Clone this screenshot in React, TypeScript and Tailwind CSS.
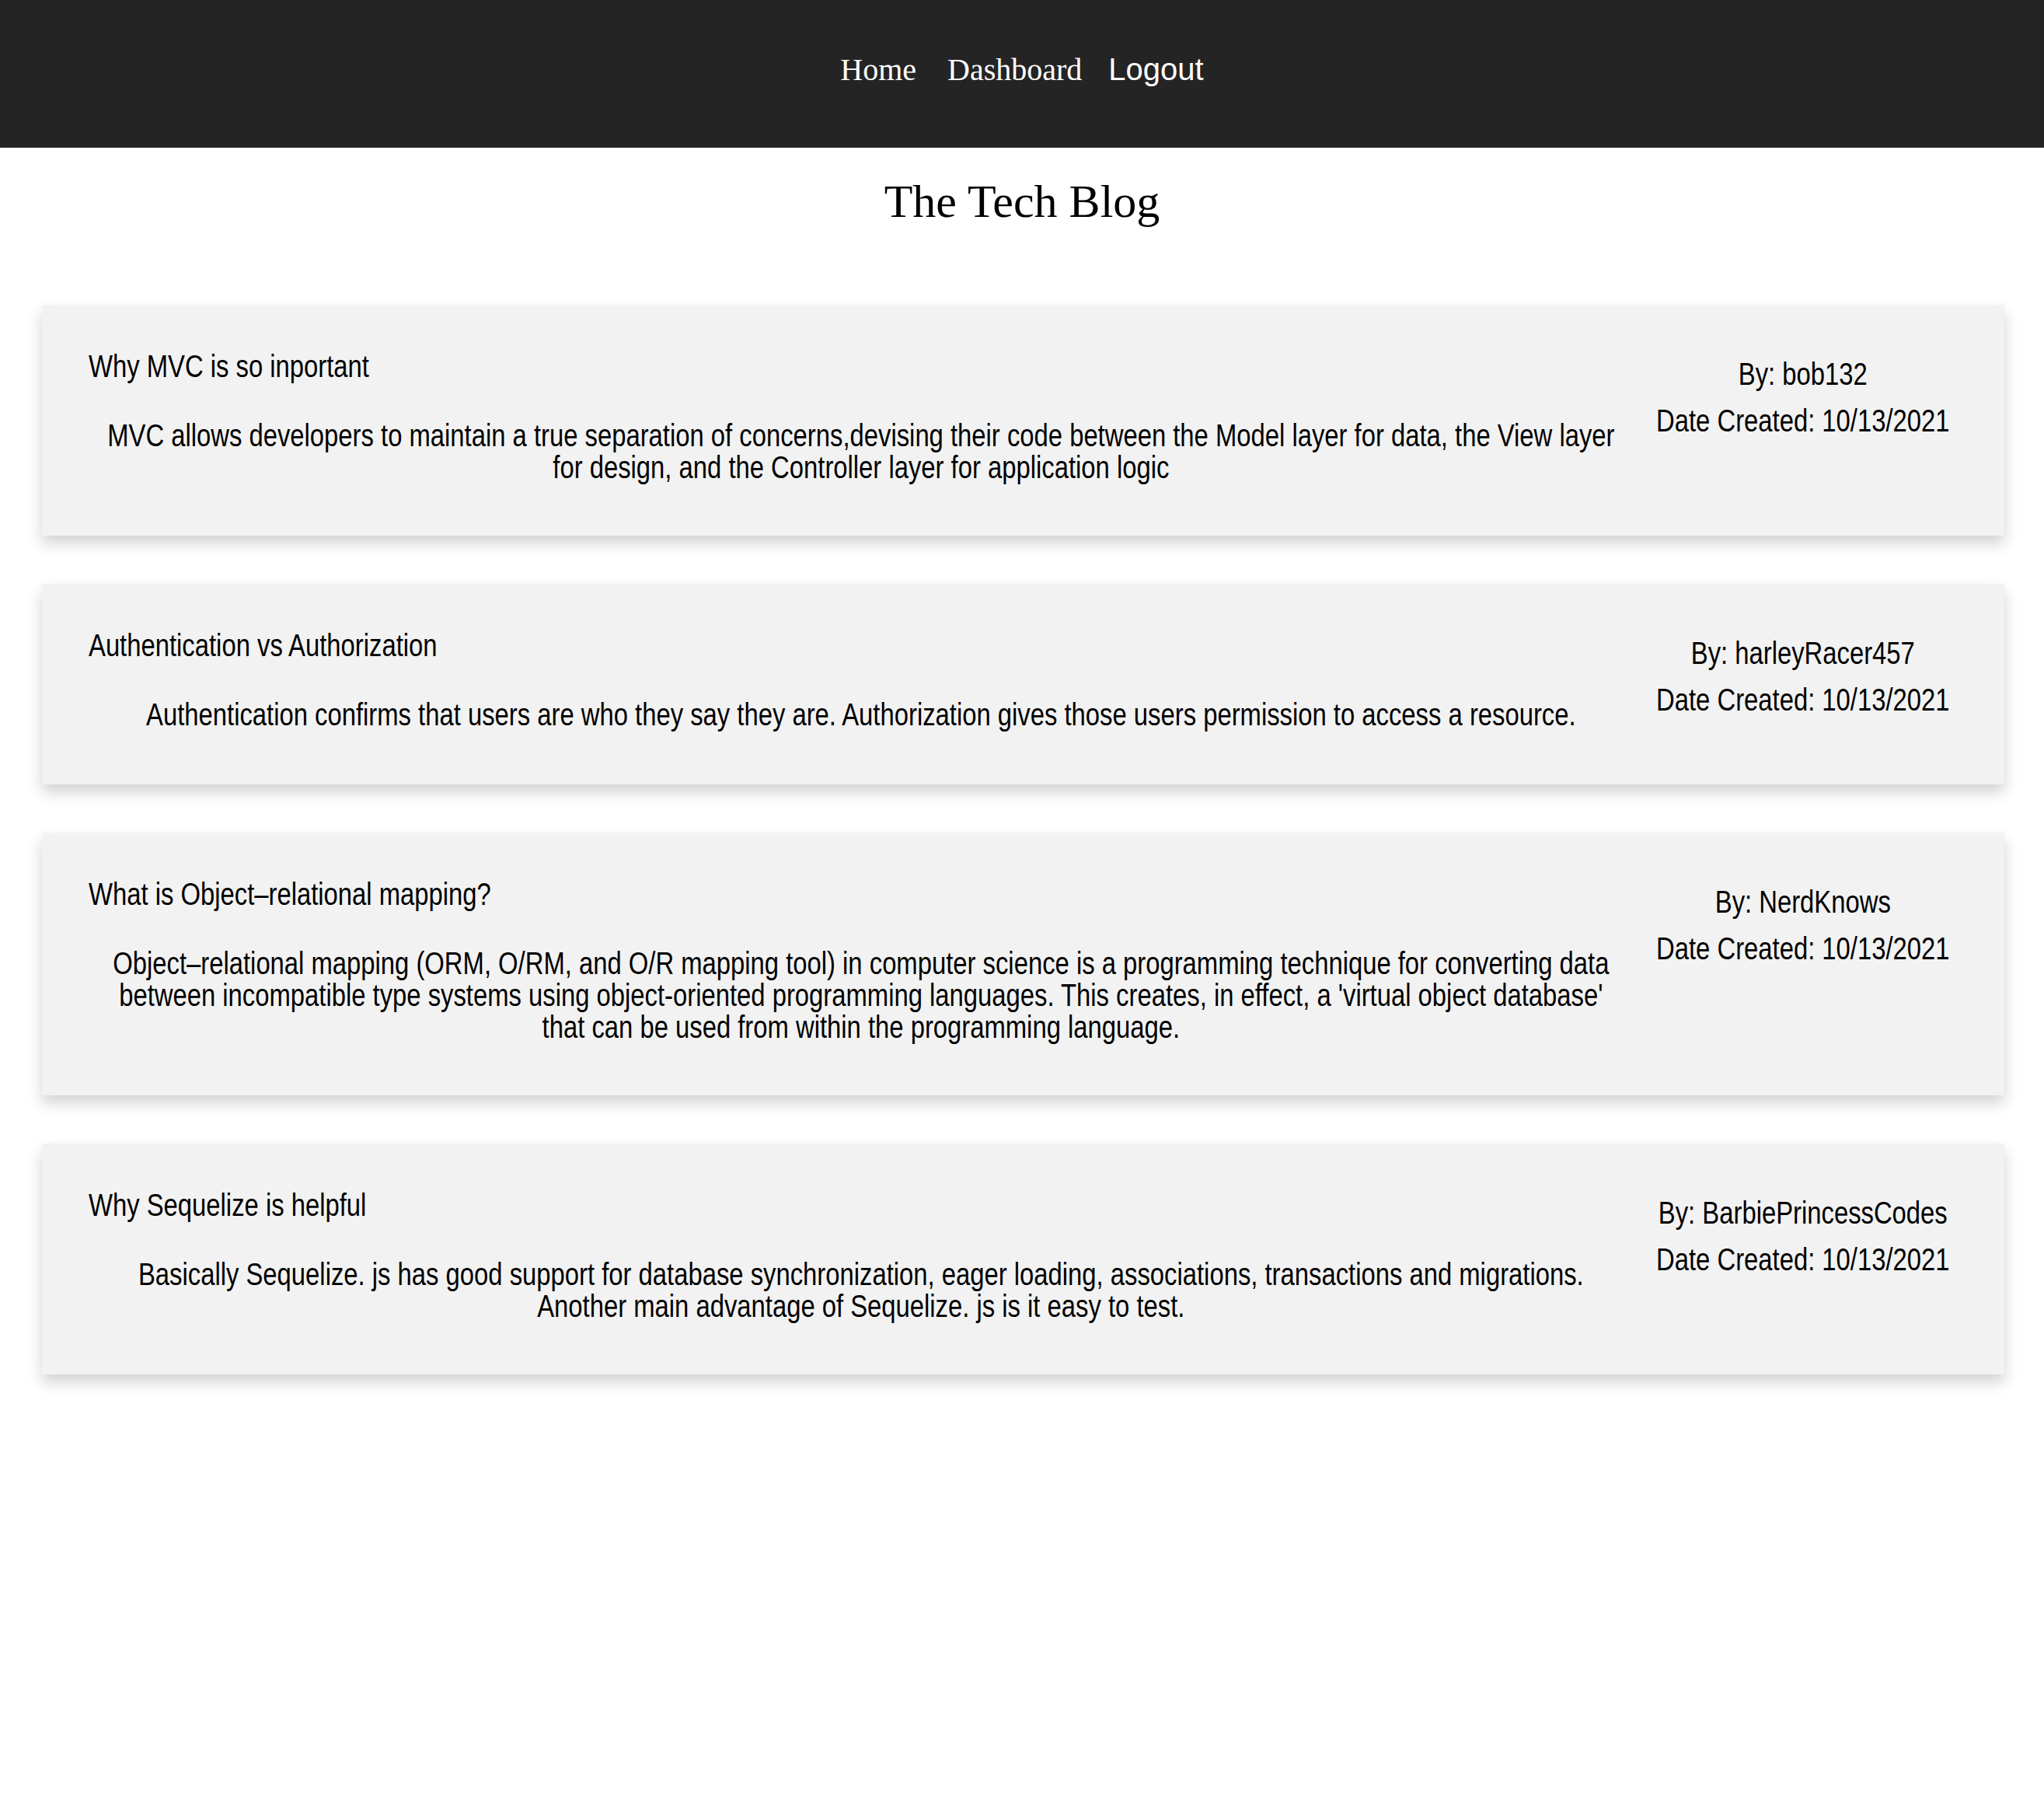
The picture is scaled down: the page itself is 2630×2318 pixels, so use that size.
import React from "react";

const posts = [
  {
    title: "Why MVC is so inportant",
    body: "MVC allows developers to maintain a true separation of concerns,devising their code between the Model layer for data, the View layer for design, and the Controller layer for application logic",
    author: "bob132",
    date: "10/13/2021",
  },
  {
    title: "Authentication vs Authorization",
    body: "Authentication confirms that users are who they say they are. Authorization gives those users permission to access a resource.",
    author: "harleyRacer457",
    date: "10/13/2021",
  },
  {
    title: "What is Object\u2013relational mapping?",
    body: "Object\u2013relational mapping (ORM, O/RM, and O/R mapping tool) in computer science is a programming technique for converting data between incompatible type systems using object-oriented programming languages. This creates, in effect, a 'virtual object database' that can be used from within the programming language.",
    author: "NerdKnows",
    date: "10/13/2021",
  },
  {
    title: "Why Sequelize is helpful",
    body: "Basically Sequelize. js has good support for database synchronization, eager loading, associations, transactions and migrations. Another main advantage of Sequelize. js is it easy to test.",
    author: "BarbiePrincessCodes",
    date: "10/13/2021",
  },
];

export default function App() {
  return (
    <div className="min-h-[2318px] bg-white text-black overflow-hidden">
      <header className="h-[190px] bg-[#242424] flex items-center justify-center pb-[12px]">
        <nav className="flex items-baseline text-white text-[40px] leading-[46px]">
          <a className="font-['Liberation_Serif',serif]">Home</a>
          <a className="ml-[40px] font-['Liberation_Serif',serif]">Dashboard</a>
          <button className="ml-[34px] font-['Liberation_Sans',sans-serif] text-white">Logout</button>
        </nav>
      </header>
      <h1 className="mt-[35px] text-center text-[60px] leading-[69px] font-normal font-['Liberation_Serif',serif]">
        The Tech Blog
      </h1>
      <main className="mt-[98px] ml-[54px] mr-[51px] flex flex-col gap-[62px]">
        {posts.map((p) => (
          <section
            key={p.title}
            className="bg-[#f2f2f2] shadow-[0_10px_18px_rgba(0,0,0,0.18)] overflow-hidden pl-[60px] pr-[60px] pt-[56px] pb-[67px] font-['Liberation_Sans',Arial,sans-serif]"
          >
            <div className="w-[2934px] flex origin-left scale-x-[0.82]">
              <div className="w-[2424px] shrink-0">
                <h2 className="text-[40px] leading-[46px] font-normal">{p.title}</h2>
                <p className="mt-[46px] px-[13px] text-center text-[40px] leading-[41px]">{p.body}</p>
              </div>
              <div className="w-[488px] shrink-0 ml-[22px] pt-[10px] pb-[19px] text-center text-[40px] leading-[46px]">
                <p>By: {p.author}</p>
                <p className="mt-[14px]">Date Created: {p.date}</p>
              </div>
            </div>
          </section>
        ))}
      </main>
    </div>
  );
}
